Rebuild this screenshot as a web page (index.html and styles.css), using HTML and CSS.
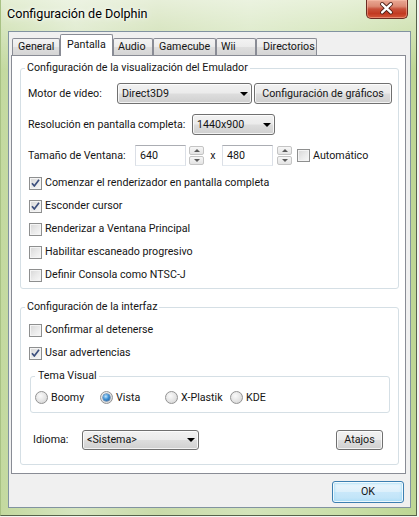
FILE: index.html
```html
<!DOCTYPE html>
<html lang="es">
<head>
<meta charset="utf-8">
<title>Configuración de Dolphin</title>
<link rel="stylesheet" href="styles.css">
</head>
<body>
<div class="window">
  <div class="titlebar">
    <span class="title">Configuración de Dolphin</span>
    <span class="close">
      <svg width="42" height="19" viewBox="0 0 42 19">
        <path d="M16.5 5 L25.5 13.5 M25.5 5 L16.5 13.5" stroke="#4a1c14" stroke-width="4.2" stroke-linecap="round" fill="none"/>
        <path d="M16.5 5 L25.5 13.5 M25.5 5 L16.5 13.5" stroke="#ffffff" stroke-width="2.4" stroke-linecap="round" fill="none"/>
      </svg>
    </span>
  </div>
  <div class="client">
    <div class="tabs">
      <span class="tab t-general">General</span>
      <span class="tab active t-pantalla">Pantalla</span>
      <span class="tab t-audio">Audio</span>
      <span class="tab t-gamecube">Gamecube</span>
      <span class="tab t-wii">Wii</span>
      <span class="tab t-dir">Directorios</span>
    </div>
    <div class="panel">
      <fieldset class="group g-video">
        <legend>Configuración de la visualización del Emulador</legend>
        <div class="row row-first">
          <span class="lbl lbl-motor">Motor de vídeo:</span>
          <span class="combo combo-motor"><span class="combo-text">Direct3D9</span><i class="arrow"></i></span>
          <span class="btn btn-graficos">Configuración de gráficos</span>
        </div>
        <div class="row row-gap">
          <span class="lbl lbl-res">Resolución en pantalla completa:</span>
          <span class="combo combo-res"><span class="combo-text">1440x900</span><i class="arrow"></i></span>
        </div>
        <div class="row row-gap">
          <span class="lbl lbl-size">Tamaño de Ventana:</span>
          <span class="input">640</span>
          <span class="spin"><span class="spin-btn"><i class="up"></i></span><span class="spin-btn"><i class="down"></i></span></span>
          <span class="times">x</span>
          <span class="input">480</span>
          <span class="spin spin-2"><span class="spin-btn"><i class="up"></i></span><span class="spin-btn"><i class="down"></i></span></span>
          <span class="check check-auto"><span class="box"></span><span>Automático</span></span>
        </div>
        <div class="check check-row check-first"><span class="box checked"><svg width="11" height="11" viewBox="0 0 11 11"><path d="M2 5.2 L4.3 8 L9 1.8" stroke="#3c4f7d" stroke-width="1.7" fill="none" stroke-linejoin="round"/></svg></span><span>Comenzar el renderizador en pantalla completa</span></div>
        <div class="check check-row"><span class="box checked"><svg width="11" height="11" viewBox="0 0 11 11"><path d="M2 5.2 L4.3 8 L9 1.8" stroke="#3c4f7d" stroke-width="1.7" fill="none" stroke-linejoin="round"/></svg></span><span>Esconder cursor</span></div>
        <div class="check check-row"><span class="box"></span><span>Renderizar a Ventana Principal</span></div>
        <div class="check check-row"><span class="box"></span><span>Habilitar escaneado progresivo</span></div>
        <div class="check check-row"><span class="box"></span><span>Definir Consola como NTSC-J</span></div>
      </fieldset>
      <fieldset class="group g-ui">
        <legend>Configuración de la interfaz</legend>
        <div class="check check-row check-first2"><span class="box"></span><span>Confirmar al detenerse</span></div>
        <div class="check check-row"><span class="box checked"><svg width="11" height="11" viewBox="0 0 11 11"><path d="M2 5.2 L4.3 8 L9 1.8" stroke="#3c4f7d" stroke-width="1.7" fill="none" stroke-linejoin="round"/></svg></span><span>Usar advertencias</span></div>
        <fieldset class="group g-theme">
          <legend>Tema Visual</legend>
          <div class="radios">
            <span class="radio"><span class="dot"></span><span>Boomy</span></span>
            <span class="radio"><span class="dot on"></span><span>Vista</span></span>
            <span class="radio"><span class="dot"></span><span>X-Plastik</span></span>
            <span class="radio"><span class="dot"></span><span>KDE</span></span>
          </div>
        </fieldset>
        <div class="row row-lang">
          <span class="lbl lbl-lang">Idioma:</span>
          <span class="combo combo-lang"><span class="combo-text">&lt;Sistema&gt;</span><i class="arrow"></i></span>
          <span class="btn btn-atajos">Atajos</span>
        </div>
      </fieldset>
    </div>
    <div class="footer">
      <span class="btn btn-ok">OK</span>
    </div>
  </div>
</div>
</body>
</html>
```
FILE: styles.css
```css
* { box-sizing: border-box; }

html, body {
  margin: 0;
  padding: 0;
}

body {
  width: 419px;
  height: 517px;
  overflow: hidden;
  background: #f4f6f1;
  font-family: Roboto, "Open Sans", sans-serif;
  font-size: 10.7px;
  line-height: 16px;
  color: #151515;
}

.window {
  width: 417px;
  height: 516px;
  border-left: 1px solid #a8c184;
  border-right: 1px solid #56634a;
  border-bottom: 1px solid #56634a;
  padding: 0 5px 7px 7px;
  display: flex;
  flex-direction: column;
  background:
    linear-gradient(180deg, rgba(255,255,255,0.55) 0, rgba(255,255,255,0.35) 24px, rgba(255,255,255,0) 70px),
    linear-gradient(90deg, #c3d99f 0, #d6e5c0 18%, #c9dba9 38%, #d3e4ba 60%, #cadfa9 82%, #bdd694 100%);
}

/* title bar */
.titlebar {
  height: 31px;
  display: flex;
  align-items: flex-start;
  justify-content: space-between;
}

.title {
  margin-top: 6px;
  margin-left: -1px;
  font-size: 12.6px;
  color: #000;
  text-shadow: 0 0 6px rgba(255,255,255,0.95), 0 0 3px rgba(255,255,255,0.9);
}

.close {
  width: 42px;
  height: 19px;
  margin-right: 3px;
  border: 1px solid #6a2c22;
  border-top: none;
  border-radius: 0 0 5px 5px;
  background: linear-gradient(180deg, #e9a894 0, #dc8a74 35%, #c8513b 50%, #c23a22 75%, #d4573a 100%);
  box-shadow: inset 0 0 0 1px rgba(255,200,180,0.45);
  display: flex;
}

.close svg { display: block; margin: -1px 0 0 -1px; }

/* client area */
.client {
  flex: 1;
  background: #f0f0f0;
  border: 1px solid #8193a0;
  padding: 2px 4px 4px 2px;
  display: flex;
  flex-direction: column;
}

.tabs {
  height: 21px;
  display: flex;
  align-items: flex-end;
  padding-left: 1px;
}

.tab {
  height: 17px;
  padding: 0 0 0 4px;
  border: 1px solid #898c95;
  border-bottom: none;
  border-radius: 2px 2px 0 0;
  background: linear-gradient(180deg, #f3f3f3 0, #ebebeb 50%, #dedede 51%, #d5d5d5 100%);
  white-space: nowrap;
}

.tab.active {
  height: 22px;
  margin-bottom: -1px;
  padding: 2px 0 0 6px;
  background: #fff;
  position: relative;
  z-index: 2;
}

.t-general { width: 48px; padding-left: 5px; }
.t-pantalla { width: 53px; }
.t-audio { width: 40px; }
.t-gamecube { width: 63px; padding-left: 5px; }
.t-wii { width: 40px; }
.t-dir { width: 61px; padding-left: 6px; }

.panel {
  height: 419px;
  background: #fff;
  border: 1px solid #898c95;
  padding: 4px 6px 0 8px;
  display: flex;
  flex-direction: column;
}

/* group boxes */
.group {
  margin: 0;
  padding: 0 7px;
  border: 1px solid #d5dfe5;
  border-radius: 3px;
  min-width: 0;
}

.group legend {
  padding: 0 2px;
  margin-left: -3px;
  line-height: 16px;
}

.g-video { padding-bottom: 5px; }
.g-ui { margin-top: 10px; padding-bottom: 14px; }

.g-theme {
  margin: 7px 1px 0 2px;
  padding: 7px 4px 8px 4px;
}
.g-theme legend { margin-left: 0; padding: 0 2px 0 3px; }

.row {
  display: flex;
  align-items: center;
  height: 21px;
}

.row-first { margin-top: 7px; }
.row-gap { margin-top: 10px; }

.lbl { flex: none; white-space: nowrap; }
.lbl-motor { width: 89px; }
.lbl-res { width: 164px; }
.lbl-size { width: 107px; }
.lbl-lang { width: 49px; margin-left: 5px; }

/* combo boxes & buttons */
.combo, .btn {
  height: 21px;
  border: 1px solid #707070;
  border-radius: 3px;
  background: linear-gradient(180deg, #f2f2f2 0, #ebebeb 48%, #dddddd 52%, #cfcfcf 100%);
  box-shadow: inset 0 0 0 1px rgba(255,255,255,0.75);
  white-space: nowrap;
}

.combo {
  display: flex;
  align-items: center;
  padding-left: 4px;
  flex: none;
}

.combo-text { flex: 1; }

.arrow {
  width: 0;
  height: 0;
  border-left: 4px solid transparent;
  border-right: 4px solid transparent;
  border-top: 4px solid #000;
  margin-right: 3px;
}

.combo-motor { width: 135px; }
.combo-res { width: 83px; }
.combo-lang { width: 117px; height: 20px; }

.btn {
  display: flex;
  align-items: center;
  justify-content: center;
  flex: none;
}

.btn-graficos { width: 138px; margin-left: 2px; }
.btn-atajos { width: 47px; height: 20px; margin-left: auto; margin-right: 8px; }

.row-lang { margin-top: 16px; height: 21px; }

/* text inputs & spinners */
.input {
  width: 51px;
  height: 21px;
  padding-left: 4px;
  display: flex;
  align-items: center;
  background: #fff;
  border: 1px solid #dbdfe6;
  border-top-color: #abadb3;
  border-bottom-color: #e3e9ef;
  flex: none;
}

.spin {
  width: 15px;
  height: 19px;
  margin-left: 3px;
  display: flex;
  flex-direction: column;
  justify-content: space-between;
  flex: none;
}

.spin-btn {
  height: 9px;
  border: 1px solid #c4c4c4;
  border-radius: 2px;
  background: linear-gradient(180deg, #f6f6f6, #e4e4e4);
  display: flex;
  align-items: center;
  justify-content: center;
}

.spin-btn .up, .spin-btn .down {
  width: 0;
  height: 0;
  border-left: 3px solid transparent;
  border-right: 3px solid transparent;
}
.spin-btn .up { border-bottom: 3px solid #5a5a5a; }
.spin-btn .down { border-top: 3px solid #5a5a5a; }

.times { width: 18px; text-align: center; flex: none; }
.spin-2 { margin-left: 4px; }

/* checkboxes */
.check {
  display: flex;
  align-items: center;
  gap: 3px;
  white-space: nowrap;
}

.check-row { height: 16px; margin-top: 7px; margin-left: 1px; }
.check-first { margin-top: 9px; }
.check-first2 { margin-top: 7px; }
.check-auto { margin-left: 5px; }

.box {
  width: 13px;
  height: 13px;
  flex: none;
  border: 1px solid #8e8f8f;
  background: linear-gradient(135deg, #d6d6d6 0, #e9e9e9 50%, #f8f8f8 100%);
  box-shadow: inset 0 0 0 1px #f4f4f4;
  display: flex;
  align-items: center;
  justify-content: center;
}

.box svg { display: block; }

/* radios */
.radios {
  display: flex;
  height: 13px;
  align-items: center;
}

.radio {
  width: 65px;
  display: flex;
  align-items: center;
  gap: 3px;
  flex: none;
}

.dot {
  width: 13px;
  height: 13px;
  border-radius: 50%;
  border: 1px solid #939393;
  background: radial-gradient(circle at 40% 35%, #fafafa 0, #e8e8e8 45%, #cfcfcf 100%);
  display: flex;
  align-items: center;
  justify-content: center;
  flex: none;
}

.dot.on::after {
  content: "";
  width: 7px;
  height: 7px;
  border-radius: 50%;
  background: radial-gradient(circle at 40% 35%, #c4e6fb 0, #3f92d6 45%, #1b4f8a 100%);
  box-shadow: 0 0 0 0.5px #2b5f96;
}

/* footer */
.footer {
  margin-top: 7px;
  display: flex;
  justify-content: flex-end;
  padding-right: 2px;
}

.btn-ok {
  width: 72px;
  height: 22px;
  border-color: #3c7fb1;
  background: linear-gradient(180deg, #edf7fd 0, #ddf0fb 48%, #c9e8fa 52%, #bde2f7 100%);
  box-shadow: inset 0 0 0 1px rgba(255,255,255,0.8), inset 0 0 2px 2px rgba(150,215,245,0.6);
}
```
